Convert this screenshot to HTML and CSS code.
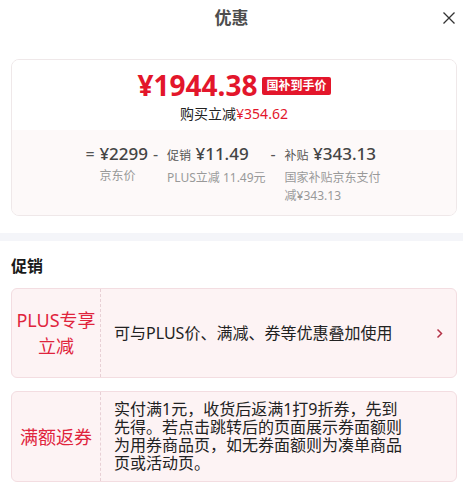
FILE: index.html
```html
<!DOCTYPE html>
<html lang="zh-CN">
<head>
    <meta charset="UTF-8">
    <meta name="viewport" content="width=device-width, initial-scale=1.0">
    <title>优惠</title>
    <link rel="stylesheet" href="styles.css">
</head>
<body>
    <header class="hd">
        <h1 class="hd-title">优惠</h1>
        <span class="hd-close">
            <svg width="14" height="14" viewBox="0 0 14 14"><path d="M1.5 1.5l11 11M12.5 1.5l-11 11" stroke="#333" stroke-width="1.3" fill="none"/></svg>
        </span>
    </header>

    <section class="wrap">
        <div class="summary">
            <div class="summary-top">
                <p class="final">
                    <span class="final-price">¥1944.38</span>
                    <span class="final-tag">国补到手价</span>
                </p>
                <p class="cut">购买立减<em>¥354.62</em></p>
            </div>
            <div class="summary-calc">
                <div class="calc-col">
                    <span class="calc-sign">=</span>
                    <div class="calc-body">
                        <p class="calc-num">¥2299</p>
                        <p class="calc-desc">京东价</p>
                    </div>
                </div>
                <div class="calc-col">
                    <span class="calc-sign">-</span>
                    <div class="calc-body">
                        <p class="calc-num"><small>促销</small> ¥11.49</p>
                        <p class="calc-desc">PLUS立减 11.49元</p>
                    </div>
                </div>
                <div class="calc-col">
                    <span class="calc-sign">-</span>
                    <div class="calc-body calc-body-narrow">
                        <p class="calc-num"><small>补贴</small> ¥343.13</p>
                        <p class="calc-desc">国家补贴京东支付减¥343.13</p>
                    </div>
                </div>
            </div>
        </div>
    </section>

    <div class="band"></div>

    <section class="wrap">
        <h2 class="sec-title">促销</h2>
        <ul class="promo-list">
            <li class="promo">
                <div class="promo-label">PLUS专享立减</div>
                <div class="promo-text">可与PLUS价、满减、券等优惠叠加使用</div>
                <div class="promo-arrow">
                    <svg width="7" height="11" viewBox="0 0 7 11"><path d="M1.5 1.5l4 4-4 4" stroke="#b33247" stroke-width="1.5" fill="none"/></svg>
                </div>
            </li>
            <li class="promo">
                <div class="promo-label">满额返券</div>
                <div class="promo-text">实付满1元，收货后返满1打9折券，先到先得。若点击跳转后的页面展示券面额则为用券商品页，如无券面额则为凑单商品页或活动页。</div>
                <div class="promo-arrow"></div>
            </li>
        </ul>
    </section>
</body>
</html>
```

FILE: styles.css
```css
*{
    padding: 0;
    margin: 0;
    list-style: none;
    box-sizing: border-box;
}
html{
    background-color: #fff;
    color: #333;
    font-family: "Noto Sans", "Noto Sans CJK SC", sans-serif;
}
.hd{
    display: grid;
    grid-template-columns: 1fr auto 1fr;
    align-items: center;
    height: 36px;
}
.hd-title{
    grid-column: 2;
    font-size: 17px;
    font-weight: bold;
    color: #4d4d4d;
    line-height: 36px;
}
.hd-close{
    grid-column: 3;
    justify-self: end;
    margin-right: 7px;
    display: flex;
}
.wrap{
    padding: 0 6px 0 11px;
}
.summary{
    margin-top: 23px;
    border: 1px solid #efe8e9;
    border-radius: 8px;
    overflow: hidden;
}
.summary-top{
    padding: 8px 0 7px;
    text-align: center;
    background-color: #fff;
}
.final{
    display: flex;
    justify-content: center;
    align-items: center;
    gap: 5px;
    height: 34px;
}
.final-price{
    font-size: 28px;
    font-weight: bold;
    color: #e3162b;
    line-height: 28px;
}
.final-tag{
    background-color: #e3162b;
    color: #fff;
    font-size: 12px;
    font-weight: bold;
    line-height: 18px;
    padding: 0 4px;
    border-radius: 2px;
    margin-top: 2px;
}
.cut{
    margin-top: 3px;
    font-size: 14px;
    line-height: 18px;
    color: #222;
}
.cut em{
    font-style: normal;
    color: #e3162b;
}
.summary-calc{
    display: flex;
    justify-content: center;
    gap: 5px;
    padding: 11px 0 10px;
    background-color: #fdf9f9;
}
.calc-col{
    display: flex;
    align-items: flex-start;
}
.calc-sign{
    font-size: 16px;
    line-height: 26px;
    color: #555;
    width: 10px;
    margin-right: 4px;
}
.calc-num{
    font-size: 17px;
    font-weight: 500;
    line-height: 26px;
    color: #444;
    white-space: nowrap;
}
.calc-num small{
    font-size: 12px;
    font-weight: normal;
    color: #555;
}
.calc-desc{
    font-size: 12px;
    line-height: 18px;
    color: #999;
}
.calc-body-narrow{
    width: 98px;
}
.band{
    height: 8px;
    margin-top: 17px;
    background-color: #f4f5f9;
}
.sec-title{
    margin-top: 13px;
    font-size: 16px;
    font-weight: bold;
    line-height: 24px;
    color: #1a1a1a;
}
.promo-list{
    display: flex;
    flex-direction: column;
    gap: 13px;
    margin-top: 10px;
}
.promo{
    display: flex;
    min-height: 90px;
    background-color: #fdf3f4;
    border: 1px solid #f3dde1;
    border-radius: 6px;
}
.promo-label{
    width: 89px;
    flex-shrink: 0;
    display: flex;
    align-items: center;
    justify-content: center;
    text-align: center;
    font-size: 18px;
    line-height: 26px;
    color: #e0243c;
    border-right: 1px dashed #e8d0d5;
}
.promo-text{
    flex: 1;
    align-self: center;
    padding: 8px 16px 9px 13px;
    font-size: 16px;
    line-height: 18px;
    color: #222;
}
.promo-arrow{
    width: 34px;
    flex-shrink: 0;
    display: flex;
    align-items: center;
    justify-content: center;
}
```
